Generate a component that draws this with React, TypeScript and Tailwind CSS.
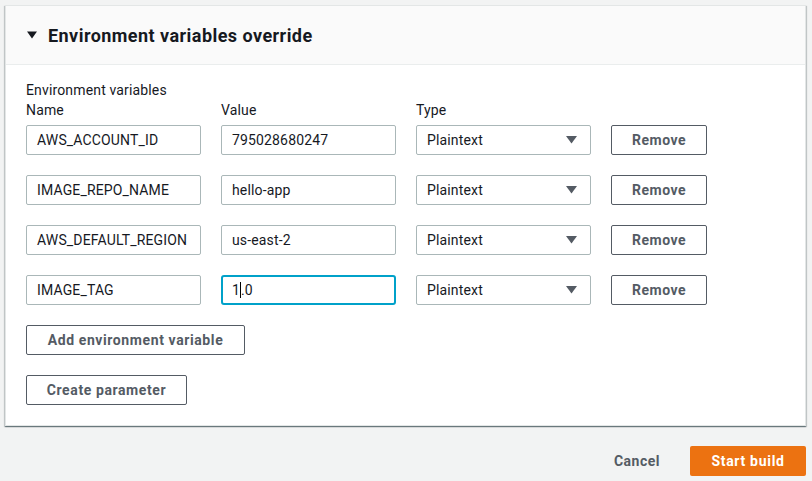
import React from "react";

const rows = [
  { name: "AWS_ACCOUNT_ID", value: "795028680247" },
  { name: "IMAGE_REPO_NAME", value: "hello-app" },
  { name: "AWS_DEFAULT_REGION", value: "us-east-2" },
  { name: "IMAGE_TAG", value: "1.0", focused: true },
];

const font = { fontFamily: "Roboto, 'Liberation Sans', sans-serif" };

function Select() {
  return (
    <div className="w-[175px] h-[30px] border border-[#aab7b8] rounded-[2px] bg-white flex items-center justify-between pl-[10px] pr-[13px] text-[14px] text-[#16191f]">
      <span>Plaintext</span>
      <svg width="11" height="8" viewBox="0 0 11 8">
        <path d="M0 0 H11 L5.5 7.5 Z" fill="#545b64" />
      </svg>
    </div>
  );
}

export default function App() {
  return (
    <div className="w-[812px] h-[481px] bg-[#f2f3f3] pt-[5px] pl-[5px] overflow-hidden" style={font}>
      {/* Card */}
      <div className="w-[801px] bg-white border border-[#e3e6e6] shadow-[0_1px_1px_0_rgba(0,28,36,0.4),1px_1px_1px_0_rgba(0,28,36,0.15),-1px_1px_1px_0_rgba(0,28,36,0.15)]">
        {/* Header */}
        <div className="h-[59px] bg-[#fafafa] border-b border-[#eaeded] flex items-center pl-[21px] gap-[11px]">
          <svg width="10" height="8" viewBox="0 0 10 8">
            <path d="M0 0.5 H10 L5 7.5 Z" fill="#16191f" />
          </svg>
          <h2 className="text-[18px] font-bold text-[#16191f] leading-none tracking-[0.45px] mt-[2px]">
            Environment variables override
          </h2>
        </div>

        {/* Body */}
        <div className="pt-[15px] pb-[20px] pl-[20px] text-[14px] text-[#16191f] tracking-[0.15px]">
          <p className="leading-[20px]">Environment variables</p>
          <div className="flex gap-[20px] leading-[20px] mb-[5px]">
            <span className="w-[175px]">Name</span>
            <span className="w-[175px]">Value</span>
            <span className="w-[175px]">Type</span>
          </div>

          <div className="flex flex-col gap-[20px]">
            {rows.map((r) => (
              <div key={r.name} className="flex gap-[20px]">
                <div className="w-[175px] h-[30px] border border-[#aab7b8] rounded-[2px] flex items-center pl-[10px]">
                  {r.name}
                </div>
                {r.focused ? (
                  <div className="w-[175px] h-[30px] border-2 border-[#00a1c9] rounded-[3px] flex items-center pl-[9px]">
                    1<span className="inline-block w-px h-[16px] bg-black" />.0
                  </div>
                ) : (
                  <div className="w-[175px] h-[30px] border border-[#aab7b8] rounded-[2px] flex items-center pl-[10px]">
                    {r.value}
                  </div>
                )}
                <Select />
                <button className="w-[96px] h-[30px] border border-[#545b64] rounded-[2px] bg-white text-[#545b64] font-bold text-[14px] tracking-[0.5px]">
                  Remove
                </button>
              </div>
            ))}
          </div>

          <div className="flex flex-col items-start gap-[20px] mt-[20px]">
            <button className="w-[219px] h-[30px] border border-[#545b64] rounded-[2px] bg-white text-[#545b64] font-bold text-[14px] tracking-[0.6px]">
              Add environment variable
            </button>
            <button className="w-[161px] h-[30px] border border-[#545b64] rounded-[2px] bg-white text-[#545b64] font-bold text-[14px] tracking-[0.6px]">
              Create parameter
            </button>
          </div>
        </div>
      </div>

      {/* Footer */}
      <div className="w-[801px] flex justify-end items-center mt-[20px] gap-[10px]">
        <button className="h-[30px] px-[20px] text-[#545b64] font-bold text-[14px] tracking-[0.5px]">Cancel</button>
        <button className="w-[116px] h-[30px] rounded-[2px] bg-[#ec7211] text-white font-bold text-[14px] tracking-[0.7px]">
          Start build
        </button>
      </div>
    </div>
  );
}
